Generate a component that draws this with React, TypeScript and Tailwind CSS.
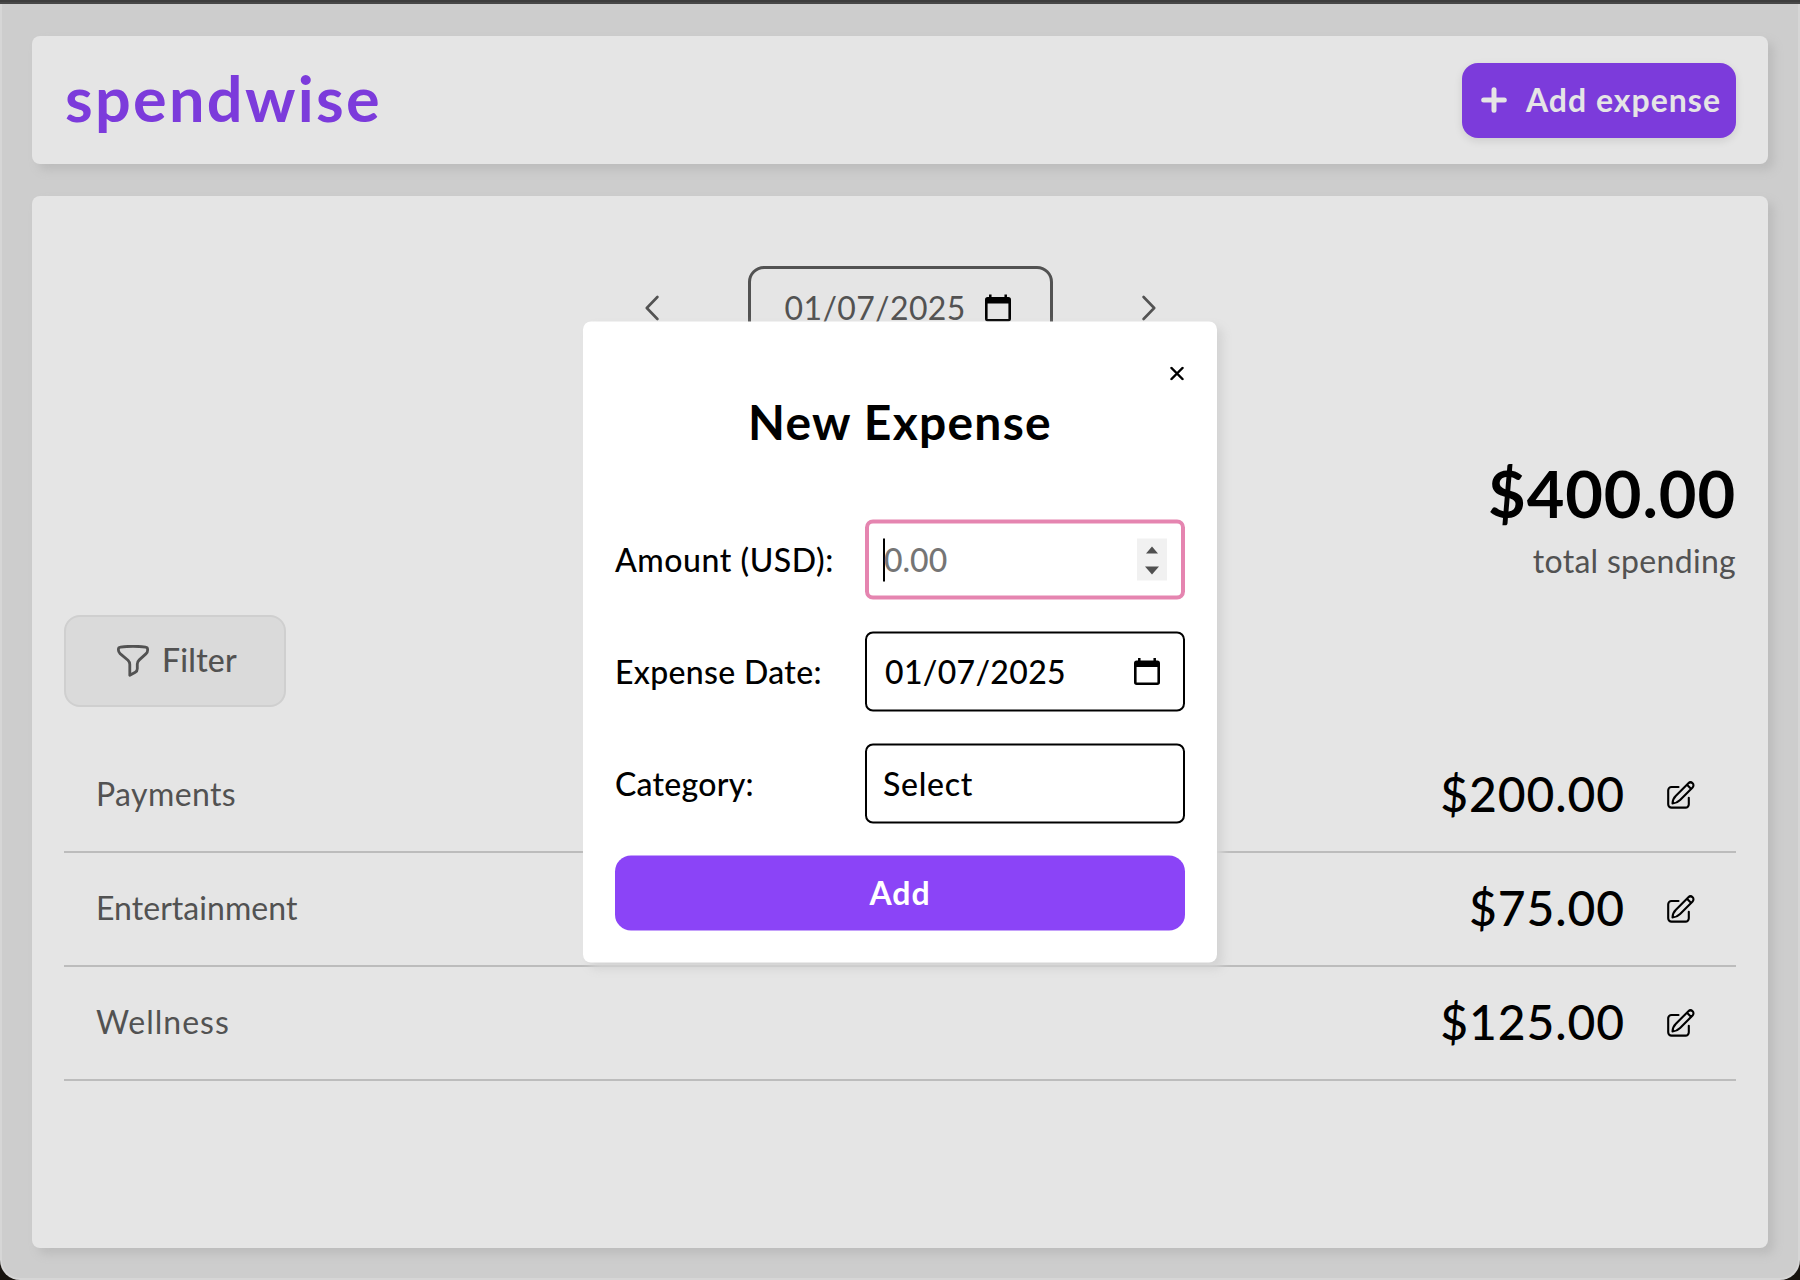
import React from "react";

function Calendar({ className }: { className: string }) {
  return (
    <svg viewBox="0 0 27 28" className={className} fill="currentColor">
      <path d="M4.200 0h2.600v2.700h13.400V0h2.600v2.700h1.400A2.800 2.800 0 0 1 27 5.500v19.700a2.800 2.800 0 0 1-2.800 2.800H2.800A2.800 2.800 0 0 1 0 25.200V5.500a2.800 2.800 0 0 1 2.800-2.800h1.400zM2.700 9.300v16h21.600v-16z" fillRule="evenodd" />
    </svg>
  );
}

function Chevron({ flip }: { flip?: boolean }) {
  return (
    <svg viewBox="0 0 14 26" className={flip ? "h-[26px] w-[14px] -scale-x-100" : "h-[26px] w-[14px]"} fill="none" stroke="currentColor" strokeWidth="2.6" strokeLinecap="round" strokeLinejoin="round">
      <path d="M12.400 2 1.800 13l10.600 11" />
    </svg>
  );
}

function Funnel() {
  return (
    <svg viewBox="0 0 32 32" className="h-8 w-8" fill="none" stroke="currentColor" strokeWidth="2.800" strokeLinejoin="round">
      <path d="M1.400 4.200c0-1.300.7-1.900 2.100-2.100C11 1.100 21 1.100 28.500 2.100c1.400.2 2.100.8 2.100 2.100v1c0 1.500-.6 2.700-1.700 3.700l-6.600 6c-1.300 1.200-2 2.400-2 4.200v4.700c0 1.600-.6 2.700-2 3.500L12.800 30.300V19.500c0-1.800-.5-3-1.800-4.300L3.100 8.600C1.900 7.500 1.400 6.300 1.400 5z" />
    </svg>
  );
}

function Pencil() {
  return (
    <svg viewBox="0 0 28 28" className="h-7 w-7" fill="none" stroke="currentColor" strokeWidth="2.1" strokeLinecap="round" strokeLinejoin="round">
      <path d="M11.500 6H4.500A3.300 3.300 0 0 0 1.200 9.300v14A3.300 3.300 0 0 0 4.500 26.600h14a3.300 3.300 0 0 0 3.300-3.300v-6.500" />
      <path d="M5.500 22.500c.1-3.300 1.200-5.600 3.400-7.800L21.400 2.200a2.900 2.900 0 0 1 4.200 4.200L13.100 18.900c-2.200 2.200-4.400 3.300-7.600 3.600zM20 3.800l4.200 4.200" />
    </svg>
  );
}

function Row({ name, amount, tracking }: { name: string; amount: string; tracking: string }) {
  return (
    <li className="flex h-[114px] items-center justify-between border-b-2 border-[#bcbcbc] pr-[41px] pl-8">
      <span className={`pb-0.5 text-[32px] text-[#525252] ${tracking}`}>{name}</span>
      <div className="flex items-center gap-[42px] text-black">
        <span className="pb-0.5 text-[48px] font-medium tracking-[0.9px]">{amount}</span>
        <Pencil />
      </div>
    </li>
  );
}

const label = "w-[250px] pb-px text-[32px] font-medium whitespace-nowrap";
const field = "flex h-20 w-80 items-center justify-between rounded-lg border-2 border-black pl-[17px]";

export default function App() {
  return (
    <div className="relative h-[1280px] w-[1800px] overflow-hidden bg-[#17130f] font-['Lato',sans-serif] leading-none">
      <div className="flex h-[1280px] flex-col gap-8 rounded-b-[20px] border-x-2 border-b-2 border-[#d6d6d6] bg-[#cdcdcd] px-[30px] pb-[30px]">
        <div className="-mx-8 -mb-8 h-1 shrink-0 border-b-2 border-[#474747] bg-[#3d3d3d]" />
        <header className="mt-8 flex h-32 shrink-0 items-center justify-between rounded-lg bg-[#e5e5e5] px-8 shadow-[6px_6px_10px_#bcbcbc]">
          <h1 className="pb-1.5 pl-px text-[63px] font-bold tracking-[2.3px] text-[#7c3bdb]">spendwise</h1>
          <button className="flex h-[75px] w-[274px] items-center justify-between rounded-2xl bg-[#7c3bdb] pr-[15px] pl-[19px] text-[#e5e5e5] shadow-[0_3px_8px_rgba(0,0,0,0.1)]">
            <svg viewBox="0 0 26 26" className="h-[26px] w-[26px]" stroke="currentColor" strokeWidth="5" strokeLinecap="round">
              <path d="M13 2.700v20.600M2.700 13h20.600" />
            </svg>
            <span className="text-[32px] font-bold tracking-[1px]">Add expense</span>
          </button>
        </header>
        <main className="flex h-[1052px] shrink-0 flex-col rounded-lg bg-[#e5e5e5] px-8 text-[#525252] shadow-[6px_6px_10px_#bcbcbc]">
          <div className="mt-[70px] flex h-[84px] items-center justify-center gap-[89px]">
            <Chevron />
            <div className="flex h-[84px] w-[305px] items-center gap-[19px] rounded-2xl border-[3px] border-[#525252] pl-[34px]">
              <span className="pb-px text-[32px] tracking-[0.38px]">01/07/2025</span>
              <Calendar className="h-[28px] w-[26px] text-black" />
            </div>
            <Chevron flip />
          </div>
          <div className="mt-[111px] flex flex-col items-end">
            <strong className="text-[65px] font-bold tracking-[0.9px] text-black">$400.00</strong>
            <span className="mt-[19px] text-[32px] tracking-[0.3px]">total spending</span>
          </div>
          <button className="mt-[38px] flex h-[92px] w-[222px] shrink-0 items-center justify-center gap-[13px] rounded-2xl border-2 border-[#cfcfcf] bg-[#dadada] pl-[4px]">
            <Funnel />
            <span className="pb-0.5 text-[32px] font-medium tracking-[0.2px]">Filter</span>
          </button>
          <ul className="mt-8 flex flex-col">
            <Row name="Payments" amount="$200.00" tracking="tracking-[0.4px]" />
            <Row name="Entertainment" amount="$75.00" tracking="tracking-[0.05px]" />
            <Row name="Wellness" amount="$125.00" tracking="tracking-[1px]" />
          </ul>
        </main>
      </div>

      <section className="absolute top-[321px] left-[583px] flex h-[641px] w-[634px] translate-y-[0.5px] flex-col rounded-lg bg-white px-8 text-black shadow-[6px_6px_10px_#d4d4d4]">
        <button className="mt-[45px] mr-px self-end">
          <svg viewBox="0 0 14 14" className="h-[14px] w-[14px]" fill="none" stroke="currentColor" strokeWidth="2.200" strokeLinecap="round">
            <path d="M1.400 1.400l11.200 11.200M12.600 1.400 1.400 12.600" />
          </svg>
        </button>
        <h2 className="mt-[17px] text-center text-[48px] font-bold tracking-[1.25px]">New Expense</h2>
        <div className="mt-[74px] flex flex-col gap-8">
          <div className="flex h-20 items-center">
            <span className={`${label} tracking-[0.55px]`}>Amount (USD):</span>
            <div className="flex h-20 w-80 items-center rounded-lg border-4 border-[#e585b0] pr-[14px] pl-[14px]">
              <span className="h-[43px] w-[2px] bg-black" />
              <span className="-ml-px grow pb-px text-[32px] font-medium text-[#757575]">0.00</span>
              <svg viewBox="0 0 30 42" className="h-[42px] w-[30px] bg-[#f1f1f1]" fill="#505050">
                <path d="M15 8l6 7H9zM15 36l-7-8h14z" />
              </svg>
            </div>
          </div>
          <div className="flex h-20 items-center">
            <span className={`${label} tracking-[0.33px]`}>Expense Date:</span>
            <div className={field}>
              <span className="pb-px pl-px text-[32px] font-medium tracking-[0.33px]">01/07/2025</span>
              <Calendar className="mr-[23px] h-[28px] w-[26px]" />
            </div>
          </div>
          <div className="flex h-20 items-center">
            <span className={`${label} tracking-[0.25px]`}>Category:</span>
            <div className={field}>
              <span className="-ml-px pb-px text-[32px] font-medium tracking-[0.7px]">Select</span>
            </div>
          </div>
        </div>
        <button className="mt-8 h-[75px] shrink-0 rounded-2xl bg-[#8b44f7] pb-0.5 text-[32px] font-bold tracking-[0.9px] text-white">Add</button>
      </section>
    </div>
  );
}
